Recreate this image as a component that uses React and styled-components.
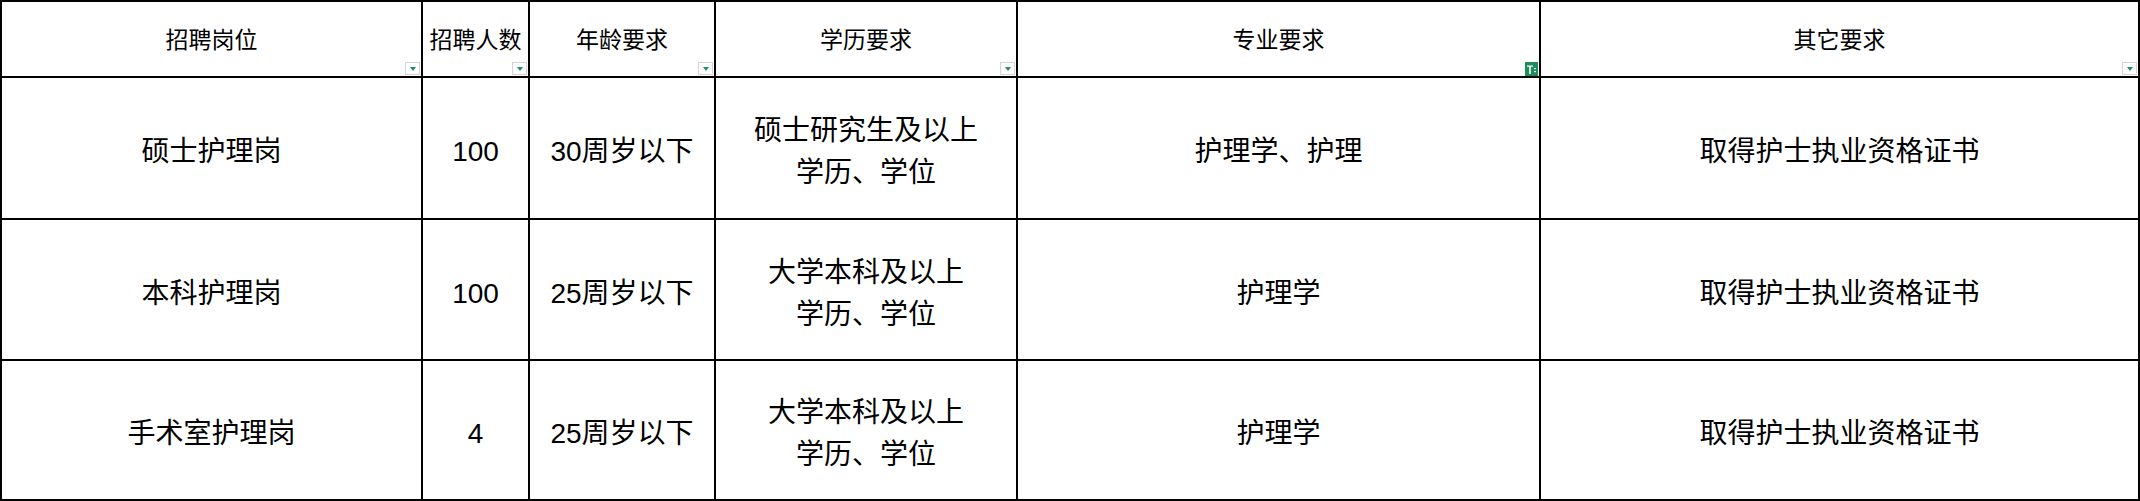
import React from "react"
import styled, { createGlobalStyle } from "styled-components"

const GlobalStyle = createGlobalStyle`
  html, body {
    margin: 0;
    padding: 0;
    background: #fff;
  }
`

const Sheet = styled.div`
  display: grid;
  grid-template-columns: 421px 107px 186px 302px 523px 599px;
  grid-template-rows: 76px 142px 141px 140px;
  width: 2140px;
  border-left: 2px solid #000;
  border-top: 2px solid #000;
  box-sizing: border-box;
  font-family: "Liberation Sans", "Noto Sans CJK SC", sans-serif;
  color: #000;
`

const Cell = styled.div`
  position: relative;
  display: flex;
  align-items: center;
  justify-content: center;
  text-align: center;
  border-right: 2px solid #000;
  border-bottom: 2px solid #000;
  box-sizing: border-box;
  font-size: ${(p) => (p.$head ? "23px" : "28px")};
  line-height: ${(p) => (p.$head ? "30px" : "42px")};
  white-space: pre-line;
  padding-top: ${(p) => (p.$head ? "2px" : "8px")};
`

const Drop = styled.span`
  position: absolute;
  right: 1px;
  bottom: 1px;
  width: 15px;
  height: 13px;
  box-sizing: border-box;
  border: 1px solid #d4d4d4;
  background: #fff;
  display: flex;
  align-items: center;
  justify-content: center;
`

const Tri = styled.span`
  width: 0;
  height: 0;
  border-left: 3px solid transparent;
  border-right: 3px solid transparent;
  border-top: 4px solid #1f8f5f;
`

const Filter = styled.span`
  position: absolute;
  right: 1px;
  bottom: 0;
  width: 13px;
  height: 14px;
  background: #1e8c5c;
  display: flex;
  align-items: center;
  justify-content: center;
`

const headers = ["招聘岗位", "招聘人数", "年龄要求", "学历要求", "专业要求", "其它要求"]

const rows = [
  ["硕士护理岗", "100", "30周岁以下", "硕士研究生及以上\n学历、学位", "护理学、护理", "取得护士执业资格证书"],
  ["本科护理岗", "100", "25周岁以下", "大学本科及以上\n学历、学位", "护理学", "取得护士执业资格证书"],
  ["手术室护理岗", "4", "25周岁以下", "大学本科及以上\n学历、学位", "护理学", "取得护士执业资格证书"],
]

const FilterIcon = () => (
  <svg width="11" height="11" viewBox="0 0 11 11">
    <path d="M1 1.5h6v1.2H4.8V10H3.2V2.7H1z" fill="#fff" />
    <rect x="8" y="4" width="2" height="1.2" fill="#fff" />
    <rect x="8" y="7" width="2" height="1.2" fill="#fff" />
  </svg>
)

const App = () => {
  return (
    <>
      <GlobalStyle />
      <Sheet>
        {headers.map((h, i) => (
          <Cell key={h} $head>
            {h}
            {i === 4 ? (
              <Filter>
                <FilterIcon />
              </Filter>
            ) : (
              <Drop>
                <Tri />
              </Drop>
            )}
          </Cell>
        ))}
        {rows.map((r, ri) =>
          r.map((c, ci) => <Cell key={ri + "-" + ci}>{c}</Cell>)
        )}
      </Sheet>
    </>
  )
}

export default App
